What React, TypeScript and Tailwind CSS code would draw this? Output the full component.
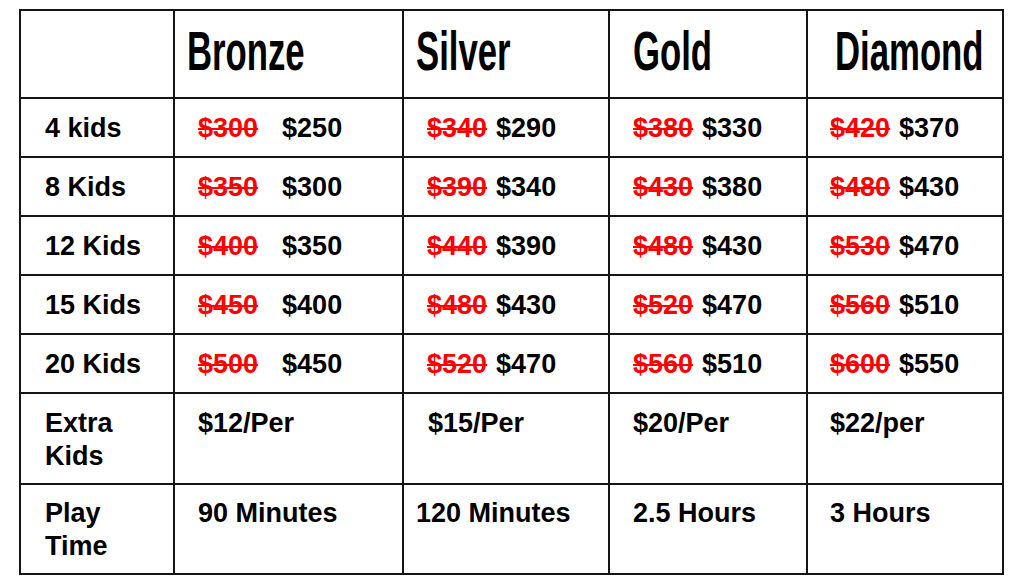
const tiers = [
  { name: 'Bronze', pad: 'pl-[12px]' },
  { name: 'Silver', pad: 'pl-[12px]' },
  { name: 'Gold', pad: 'pl-[23px]' },
  { name: 'Diamond', pad: 'pl-[27px]' },
];

const pricePads = ['pl-[23px] gap-[24px]', 'pl-[23px] gap-[9px]', 'pl-[23px] gap-[9px]', 'pl-[22px] gap-[9px]'];

const kidRows = [
  { label: '4 kids', prices: [['$300', '$250'], ['$340', '$290'], ['$380', '$330'], ['$420', '$370']] },
  { label: '8 Kids', prices: [['$350', '$300'], ['$390', '$340'], ['$430', '$380'], ['$480', '$430']] },
  { label: '12 Kids', prices: [['$400', '$350'], ['$440', '$390'], ['$480', '$430'], ['$530', '$470']] },
  { label: '15 Kids', prices: [['$450', '$400'], ['$480', '$430'], ['$520', '$470'], ['$560', '$510']] },
  { label: '20 Kids', prices: [['$500', '$450'], ['$520', '$470'], ['$560', '$510'], ['$600', '$550']] },
];

const extras = [
  { text: '$12/Per', pad: 'pl-[23px]' },
  { text: '$15/Per', pad: 'pl-[24px]' },
  { text: '$20/Per', pad: 'pl-[23px]' },
  { text: '$22/per', pad: 'pl-[22px]' },
];
const playTimes = [
  { text: '90 Minutes', pad: 'pl-[23px]' },
  { text: '120 Minutes', pad: 'pl-[12px]' },
  { text: '2.5 Hours', pad: 'pl-[23px]' },
  { text: '3 Hours', pad: 'pl-[22px]' },
];

const body = "font-['Liberation_Sans',Arial,sans-serif] font-bold text-[27px] leading-[33px] text-black";

export default function App() {
  return (
    <div className="w-[1024px] h-[587px] bg-white overflow-hidden">
      <div className="ml-[19px] mt-[9px] w-[985px] p-[2px] bg-[#151515] grid grid-cols-[152px_227px_204px_196px_194px] grid-rows-[86px_57px_57px_57px_57px_57px_89px_88px] gap-[2px]">
        <div className="bg-white" />
        {tiers.map((t) => (
          <div key={t.name} className={`bg-white flex items-center pb-[6px] ${t.pad}`}>
            <span className="origin-left scale-x-[0.62] font-['Liberation_Sans',Arial,sans-serif] font-bold text-[56px] leading-none text-black whitespace-nowrap">
              {t.name}
            </span>
          </div>
        ))}

        {kidRows.map((row) => (
          <div key={row.label} className="contents">
            <div className={`bg-white flex items-center pt-[2px] pl-[24px] ${body}`}>{row.label}</div>
            {row.prices.map(([oldP, newP], i) => (
              <div key={i} className={`bg-white flex items-center pt-[2px] ${pricePads[i]} ${body}`}>
                <span className="text-[#ff0000] line-through decoration-2">{oldP}</span>
                <span>{newP}</span>
              </div>
            ))}
          </div>
        ))}

        <div className={`bg-white pl-[24px] pt-[13px] ${body}`}>
          Extra
          <br />
          Kids
        </div>
        {extras.map((e) => (
          <div key={e.text} className={`bg-white pt-[13px] ${e.pad} ${body}`}>
            {e.text}
          </div>
        ))}

        <div className={`bg-white pl-[24px] pt-[12px] ${body}`}>
          Play
          <br />
          Time
        </div>
        {playTimes.map((p) => (
          <div key={p.text} className={`bg-white pt-[12px] ${p.pad} ${body}`}>
            {p.text}
          </div>
        ))}
      </div>
    </div>
  );
}
